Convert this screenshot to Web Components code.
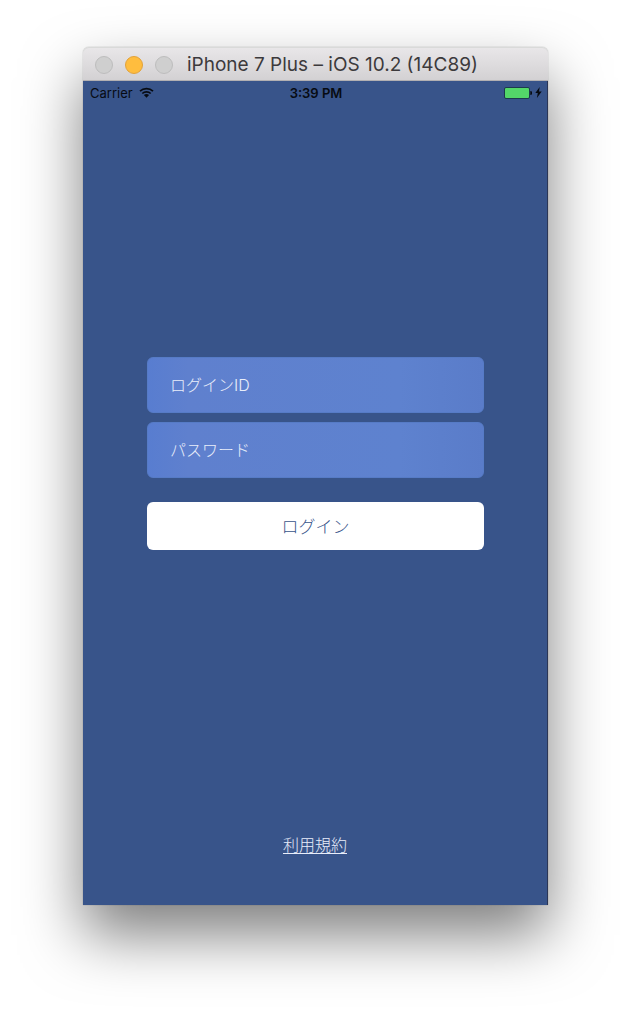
<!DOCTYPE html>
<html lang="ja">
<head>
<meta charset="UTF-8">
<meta name="viewport" content="width=device-width, initial-scale=1.0">
<title>ログイン</title>
<style>
  body {
    margin: 0;
    min-height: 100vh;
    box-sizing: border-box;
    display: flex;
    padding: 47px 83px 119px;
    background-color: #fff;
    font-family: Inter, "Noto Sans CJK JP", sans-serif;
  }
</style>
</head>
<body>
  <simulator-window heading="iPhone 7 Plus – iOS 10.2 (14C89)">
    <status-bar carrier="Carrier" time="3:39 PM"></status-bar>
    <login-form>
      <login-field name="login-id" label="ログインID"></login-field>
      <login-field name="password" type="password" label="パスワード"></login-field>
      <login-button slot="action">ログイン</login-button>
    </login-form>
    <terms-link href="#terms">利用規約</terms-link>
  </simulator-window>

<script>
class SimulatorWindow extends HTMLElement {
  constructor() {
    super();
    this.attachShadow({ mode: 'open' });
  }

  connectedCallback() {
    this.render();
  }

  render() {
    this.shadowRoot.innerHTML = `
      <style>
        :host {
          display: flex;
          flex-direction: column;
          flex: 1;
          min-width: 0;
          border-radius: 6px 6px 0 0;
          box-shadow: 0 0 1px rgba(0, 0, 0, 0.5), 0 30px 60px rgba(0, 0, 0, 0.5);
        }

        header {
          display: flex;
          align-items: center;
          gap: 14px;
          height: 34px;
          padding: 2px 12px 0;
          box-sizing: border-box;
          border-bottom: 1px solid #b2b0b2;
          border-radius: 6px 6px 0 0;
          background: linear-gradient(#e9e7e9, #d3d1d3);
          box-shadow: inset 0 1px #d9dad9;
        }

        .lights {
          display: flex;
          gap: 12px;
        }

        .lights button {
          width: 18px;
          height: 18px;
          padding: 0;
          box-sizing: border-box;
          border: 1px solid #bdbdbd;
          border-radius: 50%;
          background-color: #cfcfcf;
        }

        .lights .minimize {
          border-color: #e2a23a;
          background-color: #ffbd3e;
        }

        h1 {
          margin: 0;
          color: #3c3a3c;
          font-size: 19px;
          font-weight: 400;
          line-height: 24px;
          white-space: nowrap;
        }

        main {
          display: flex;
          flex-direction: column;
          flex: 1;
          box-sizing: border-box;
          border-right: 1px solid #2b3656;
          background-color: #38548a;
        }
      </style>

      <header>
        <div class="lights">
          <button type="button" aria-label="Close"></button>
          <button type="button" class="minimize" aria-label="Minimize"></button>
          <button type="button" aria-label="Zoom"></button>
        </div>
        <h1>${this.getAttribute('heading')}</h1>
      </header>
      <main><slot></slot></main>
    `;
  }
}

class StatusBar extends HTMLElement {
  constructor() {
    super();
    this.attachShadow({ mode: 'open' });
  }

  connectedCallback() {
    this.render();
  }

  render() {
    this.shadowRoot.innerHTML = `
      <style>
        :host {
          display: grid;
          grid-template-columns: 1fr auto 1fr;
          align-items: center;
          height: 23px;
          padding: 0 5px 0 7px;
          color: #070b12;
          font-size: 13px;
          line-height: 16px;
        }

        .left, .right {
          display: flex;
          align-items: center;
          gap: 6px;
        }

        .right {
          justify-content: flex-end;
          gap: 3px;
        }

        time {
          font-weight: 600;
        }

        svg {
          display: block;
        }
      </style>

      <div class="left">
        <span>${this.getAttribute('carrier')}</span>
        <svg width="15" height="11" viewBox="0 0 15 11" aria-hidden="true">
          <g fill="none" stroke="currentColor" stroke-width="1.7">
            <path d="M1 4.2a9.3 9.3 0 0 1 13 0"/>
            <path d="M3.3 6.5a6 6 0 0 1 8.4 0"/>
          </g>
          <path d="M7.5 10.8 4.9 8.1a3.8 3.8 0 0 1 5.2 0z" fill="currentColor"/>
        </svg>
      </div>
      <time>${this.getAttribute('time')}</time>
      <div class="right">
        <svg width="28" height="12" viewBox="0 0 28 12" aria-hidden="true">
          <rect x="0.5" y="0.5" width="25" height="11" rx="1.5" fill="#53d769" stroke="#1c3a4d"/>
          <path d="M26.3 4a2 2 0 0 1 0 4z" fill="currentColor"/>
        </svg>
        <svg width="7" height="11" viewBox="0 0 7 11" aria-hidden="true">
          <path d="M4.7 0 0.3 6h2.5L1.9 11 6.7 4.6H4z" fill="currentColor"/>
        </svg>
      </div>
    `;
  }
}

class LoginForm extends HTMLElement {
  constructor() {
    super();
    this.attachShadow({ mode: 'open' });
  }

  connectedCallback() {
    this.render();
  }

  render() {
    this.shadowRoot.innerHTML = `
      <style>
        :host {
          display: flex;
          flex-direction: column;
          justify-content: center;
          flex: 1;
          padding: 0 63px 0 64px;
        }

        form, .fields {
          display: flex;
          flex-direction: column;
        }

        form {
          gap: 24px;
        }

        .fields {
          gap: 9px;
        }
      </style>

      <form>
        <div class="fields"><slot></slot></div>
        <slot name="action"></slot>
      </form>
    `;
  }
}

class LoginField extends HTMLElement {
  constructor() {
    super();
    this.attachShadow({ mode: 'open' });
  }

  connectedCallback() {
    this.render();
  }

  render() {
    const label = this.getAttribute('label');
    const type = this.getAttribute('type') || 'text';

    this.shadowRoot.innerHTML = `
      <style>
        :host {
          display: block;
        }

        input {
          display: block;
          width: 100%;
          height: 56px;
          padding: 0 22px;
          box-sizing: border-box;
          border: 1px solid #567bc6;
          border-radius: 6px;
          background: linear-gradient(90deg, #587dd0, #5f80ce 12%, #5e82cf 75%, #5a7cc9);
          color: #fff;
          font: inherit;
          font-size: 16px;
          font-weight: 300;
        }

        input::placeholder {
          color: #e9eefa;
          opacity: 1;
        }
      </style>

      <input type="${type}" name="${this.getAttribute('name')}" placeholder="${label}" aria-label="${label}">
    `;
  }
}

class LoginButton extends HTMLElement {
  constructor() {
    super();
    this.attachShadow({ mode: 'open' });
  }

  connectedCallback() {
    this.render();
  }

  render() {
    this.shadowRoot.innerHTML = `
      <style>
        :host {
          display: block;
        }

        button {
          display: block;
          width: 100%;
          height: 48px;
          padding: 0;
          border: 0;
          border-radius: 6px;
          background-color: #fff;
          color: #38548a;
          font: inherit;
          font-size: 17px;
          font-weight: 300;
        }
      </style>

      <button type="submit"><slot></slot></button>
    `;
  }
}

class TermsLink extends HTMLElement {
  constructor() {
    super();
    this.attachShadow({ mode: 'open' });
  }

  connectedCallback() {
    this.render();
  }

  render() {
    this.shadowRoot.innerHTML = `
      <style>
        :host {
          display: flex;
          justify-content: center;
          padding: 31px 0 48px;
        }

        a {
          color: #e9eefa;
          font-size: 16px;
          font-weight: 300;
          line-height: 24px;
          text-underline-offset: 2px;
        }
      </style>

      <a href="${this.getAttribute('href')}"><slot></slot></a>
    `;
  }
}

customElements.define('simulator-window', SimulatorWindow);
customElements.define('status-bar', StatusBar);
customElements.define('login-form', LoginForm);
customElements.define('login-field', LoginField);
customElements.define('login-button', LoginButton);
customElements.define('terms-link', TermsLink);
</script>
</body>
</html>
